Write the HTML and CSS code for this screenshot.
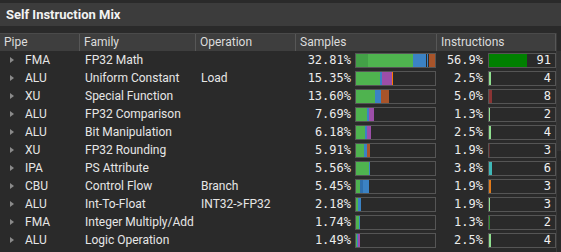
FILE: index.html
```html
<!DOCTYPE html>
<html lang="en">
<head>
  <meta charset="UTF-8">
  <title>Self Instruction Mix</title>
  <link rel="stylesheet" href="styles.css">
</head>
<body>
  <div class="panel">
    <div class="title-bar">Self Instruction Mix</div>

    <div class="body">
      <div class="table">
        <div class="row head">
          <div class="cell">Pipe</div>
          <div class="cell">Family</div>
          <div class="cell">Operation</div>
          <div class="cell">Samples</div>
          <div class="cell">Instructions</div>
        </div>

        <div class="row">
          <div class="cell pipe"><span class="arrow"></span>FMA</div>
          <div class="cell">FP32 Math</div>
          <div class="cell"></div>
          <div class="cell samples">
            <span class="pct">32.81%</span>
            <div class="bar">
              <i class="dkgreen" style="width:12px"></i><i class="green" style="width:45px"></i><i class="blue" style="width:13px"></i><i class="gap" style="width:1px"></i><i class="blue" style="width:1px"></i><i class="gap" style="width:1px"></i><i class="brown" style="width:6px"></i>
            </div>
          </div>
          <div class="cell instr">
            <span class="pct">56.9%</span>
            <div class="count-box"><i class="fill" style="width:38px;background:#008000"></i><span class="count">91</span></div>
          </div>
        </div>

        <div class="row">
          <div class="cell pipe"><span class="arrow"></span>ALU</div>
          <div class="cell">Uniform Constant</div>
          <div class="cell">Load</div>
          <div class="cell samples">
            <span class="pct">15.35%</span>
            <div class="bar">
              <i class="green" style="width:24px"></i><i class="blue" style="width:2px"></i><i class="purple" style="width:10px"></i><i class="orange" style="width:1px"></i>
            </div>
          </div>
          <div class="cell instr">
            <span class="pct">2.5%</span>
            <div class="count-box"><i class="fill" style="width:2px;background:#8fe08f"></i><span class="count">4</span></div>
          </div>
        </div>

        <div class="row">
          <div class="cell pipe"><span class="arrow"></span>XU</div>
          <div class="cell">Special Function</div>
          <div class="cell"></div>
          <div class="cell samples">
            <span class="pct">13.60%</span>
            <div class="bar">
              <i class="green" style="width:19px"></i><i class="blue" style="width:6px"></i><i class="brown" style="width:8px"></i>
            </div>
          </div>
          <div class="cell instr">
            <span class="pct">5.0%</span>
            <div class="count-box"><i class="fill" style="width:3px;background:#8a3434"></i><span class="count">8</span></div>
          </div>
        </div>

        <div class="row">
          <div class="cell pipe"><span class="arrow"></span>ALU</div>
          <div class="cell">FP32 Comparison</div>
          <div class="cell"></div>
          <div class="cell samples">
            <span class="pct">7.69%</span>
            <div class="bar">
              <i class="green" style="width:11px"></i><i class="blue" style="width:2px"></i><i class="purple" style="width:5px"></i>
            </div>
          </div>
          <div class="cell instr">
            <span class="pct">1.3%</span>
            <div class="count-box"><i class="fill" style="width:1px;background:#8fe08f"></i><span class="count">2</span></div>
          </div>
        </div>

        <div class="row">
          <div class="cell pipe"><span class="arrow"></span>ALU</div>
          <div class="cell">Bit Manipulation</div>
          <div class="cell"></div>
          <div class="cell samples">
            <span class="pct">6.18%</span>
            <div class="bar">
              <i class="green" style="width:9px"></i><i class="blue" style="width:2px"></i><i class="purple" style="width:4px"></i>
            </div>
          </div>
          <div class="cell instr">
            <span class="pct">2.5%</span>
            <div class="count-box"><i class="fill" style="width:2px;background:#8fe08f"></i><span class="count">4</span></div>
          </div>
        </div>

        <div class="row">
          <div class="cell pipe"><span class="arrow"></span>XU</div>
          <div class="cell">FP32 Rounding</div>
          <div class="cell"></div>
          <div class="cell samples">
            <span class="pct">5.91%</span>
            <div class="bar">
              <i class="green" style="width:8px"></i><i class="blue" style="width:3px"></i><i class="brown" style="width:3px"></i>
            </div>
          </div>
          <div class="cell instr">
            <span class="pct">1.9%</span>
            <div class="count-box"><i class="fill" style="width:1px;background:#5e2e2e"></i><span class="count">3</span></div>
          </div>
        </div>

        <div class="row">
          <div class="cell pipe"><span class="arrow"></span>IPA</div>
          <div class="cell">PS Attribute</div>
          <div class="cell"></div>
          <div class="cell samples">
            <span class="pct">5.56%</span>
            <div class="bar">
              <i class="green" style="width:13px"></i><i class="blue" style="width:1px"></i>
            </div>
          </div>
          <div class="cell instr">
            <span class="pct">3.8%</span>
            <div class="count-box"><i class="fill" style="width:3px;background:#3fb8b8"></i><span class="count">6</span></div>
          </div>
        </div>

        <div class="row">
          <div class="cell pipe"><span class="arrow"></span>CBU</div>
          <div class="cell">Control Flow</div>
          <div class="cell">Branch</div>
          <div class="cell samples">
            <span class="pct">5.45%</span>
            <div class="bar">
              <i class="green" style="width:4px"></i><i class="dkblue" style="width:3px"></i><i class="blue" style="width:6px"></i>
            </div>
          </div>
          <div class="cell instr">
            <span class="pct">1.9%</span>
            <div class="count-box"><i class="fill" style="width:2px;background:#e07a1a"></i><span class="count">3</span></div>
          </div>
        </div>

        <div class="row">
          <div class="cell pipe"><span class="arrow"></span>ALU</div>
          <div class="cell">Int-To-Float</div>
          <div class="cell">INT32-&gt;FP32</div>
          <div class="cell samples">
            <span class="pct">2.18%</span>
            <div class="bar">
              <i class="green" style="width:2px"></i><i class="blue" style="width:3px"></i>
            </div>
          </div>
          <div class="cell instr">
            <span class="pct">1.9%</span>
            <div class="count-box"><i class="fill" style="width:1px;background:#8fe08f"></i><span class="count">3</span></div>
          </div>
        </div>

        <div class="row">
          <div class="cell pipe"><span class="arrow"></span>FMA</div>
          <div class="cell">Integer Multiply/Add</div>
          <div class="cell"></div>
          <div class="cell samples">
            <span class="pct">1.74%</span>
            <div class="bar">
              <i class="green" style="width:3px"></i><i class="blue" style="width:1px"></i>
            </div>
          </div>
          <div class="cell instr">
            <span class="pct">1.3%</span>
            <div class="count-box"><i class="fill" style="width:1px;background:#2e8b2e"></i><span class="count">2</span></div>
          </div>
        </div>

        <div class="row">
          <div class="cell pipe"><span class="arrow"></span>ALU</div>
          <div class="cell">Logic Operation</div>
          <div class="cell"></div>
          <div class="cell samples">
            <span class="pct">1.49%</span>
            <div class="bar">
              <i class="green" style="width:1px"></i><i class="blue" style="width:1px"></i><i class="purple" style="width:2px"></i>
            </div>
          </div>
          <div class="cell instr">
            <span class="pct">2.5%</span>
            <div class="count-box"><i class="fill" style="width:2px;background:#8fe08f"></i><span class="count">4</span></div>
          </div>
        </div>
      </div>

      <div class="scrollbar"><div class="thumb"></div></div>
    </div>
  </div>
</body>
</html>
```

FILE: styles.css
```css
body {
  margin: 0;
  background: #2a2a2a;
  color: #e6e6e6;
  font-family: Roboto, "Liberation Sans", sans-serif;
  font-size: 12px;
  width: 561px;
  height: 252px;
  overflow: hidden;
}
.panel {
  padding-top: 3px;
}
.title-bar {
  height: 23px;
  line-height: 23px;
  background: #3c3c3c;
  padding-left: 6px;
  font-weight: bold;
  font-size: 13px;
  color: #f2f2f2;
}
.body {
  display: flex;
  margin-top: 7px;
}
.table {
  flex: 1;
}
.row {
  display: grid;
  grid-template-columns: 80px 116px 100px 141px 119px;
  height: 18px;
  align-items: center;
}
.row.head {
  box-sizing: border-box;
  height: 18px;
  background: #3e3e3e;
  border-top: 1px solid #4a4a4a;
}
.head .cell {
  height: 17px;
  line-height: 16px;
  padding-left: 4px;
  border-right: 1px solid #575757;
  color: #dcdcdc;
}
.cell {
  box-sizing: border-box;
  padding-left: 5px;
  white-space: nowrap;
  overflow: hidden;
}
.pipe {
  display: flex;
  align-items: center;
  padding-left: 10px;
}
.arrow {
  width: 0;
  height: 0;
  border-top: 3.5px solid transparent;
  border-bottom: 3.5px solid transparent;
  border-left: 4px solid #8a8a8a;
  margin-right: 11px;
}
.samples, .instr {
  display: flex;
  align-items: center;
  padding-left: 0;
}
.pct {
  font-family: "DejaVu Sans Mono", monospace;
  font-size: 12px;
  text-align: right;
  color: #ececec;
}
.samples .pct {
  width: 55px;
  margin-right: 4px;
}
.instr .pct {
  width: 46px;
  margin-right: 5px;
}
.bar, .count-box {
  box-sizing: border-box;
  height: 15px;
  border: 1px solid #555;
  display: flex;
}
.bar {
  width: 81px;
}
.count-box {
  width: 68px;
  position: relative;
}
.bar i, .count-box i {
  display: block;
  height: 100%;
}
.count {
  position: absolute;
  right: 4px;
  top: 0;
  line-height: 13px;
  font-family: "DejaVu Sans Mono", monospace;
  color: #f2f2f2;
}
.dkgreen { background: #43a047; }
.green { background: #4fb34f; }
.blue { background: #3b82c4; }
.dkblue { background: #2f6fae; }
.gap { background: #2a2a2a; }
.brown { background: #a8542a; }
.purple { background: #9c4ea8; }
.orange { background: #ff7a00; }
.scrollbar {
  width: 5px;
  border-left: 1px solid #3a3a3a;
  height: 220px;
}
.thumb {
  margin-top: 18px;
  height: 100px;
  background: #333;
}
```
